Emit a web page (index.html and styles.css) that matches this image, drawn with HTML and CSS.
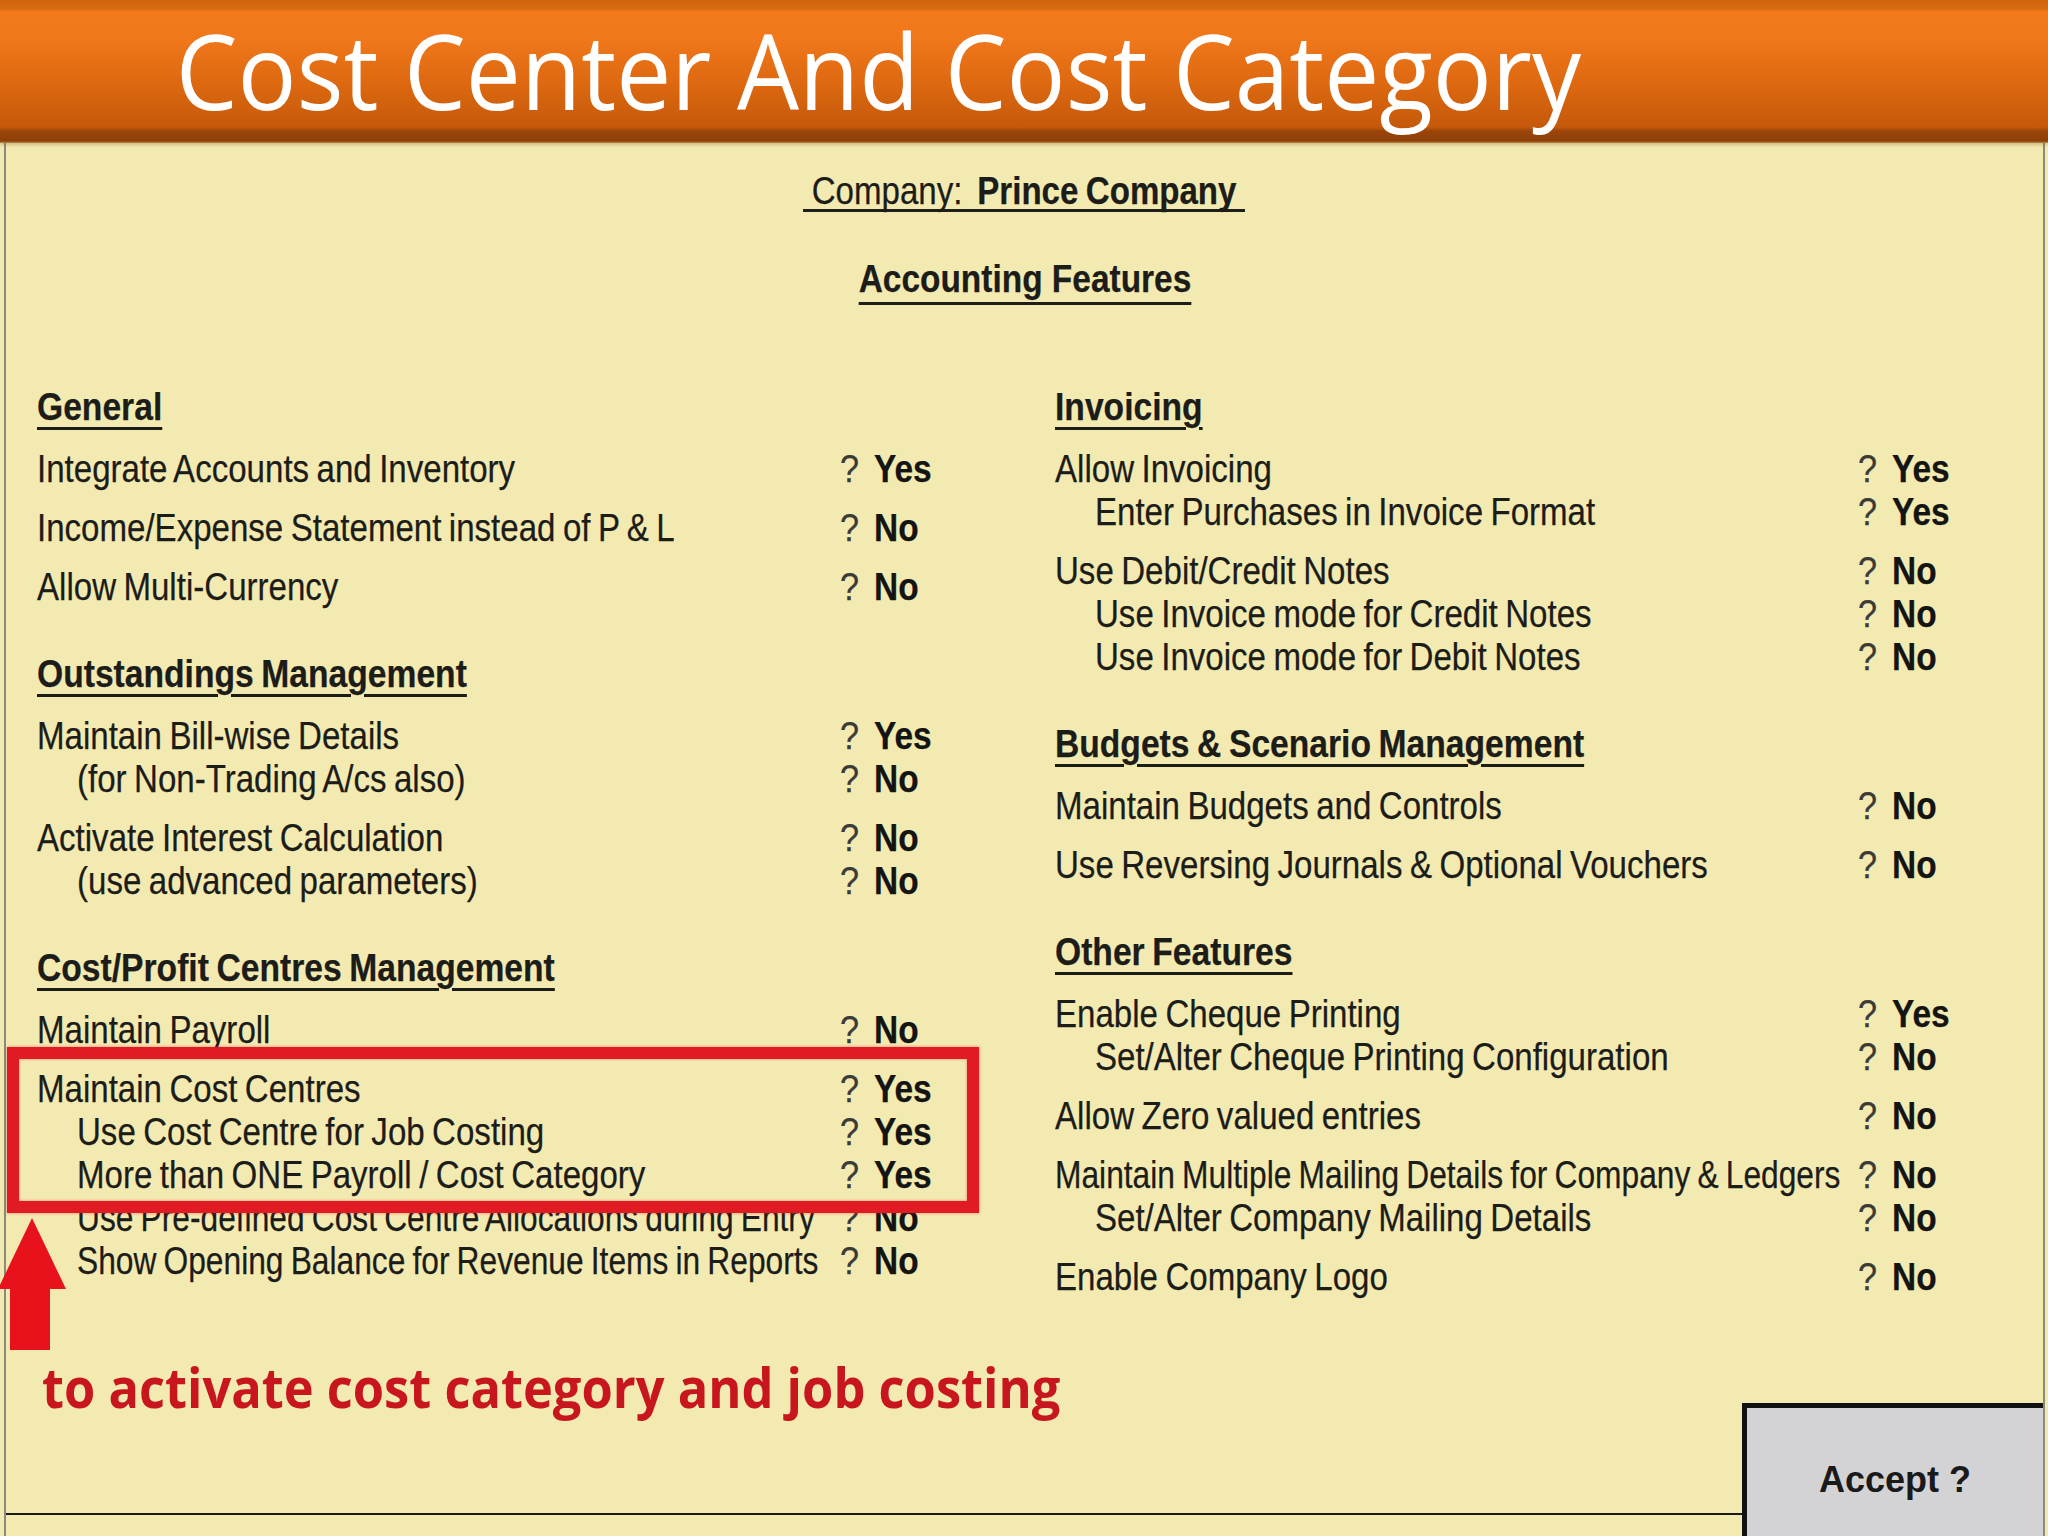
FILE: index.html
```html
<!DOCTYPE html>
<html lang="en">
<head>
<meta charset="utf-8">
<title>Cost Center And Cost Category</title>
<link rel="stylesheet" href="styles.css">
</head>
<body>
<header class="titlebar">
  <h1 class="title">Cost Center And Cost Category</h1>
</header>
<main class="sheet">
  <div class="company"><span class="company-line">Company:&nbsp; <b>Prince Company</b></span></div>
  <div class="features"><span class="features-line">Accounting Features</span></div>

  <div class="columns">
    <div class="col">
      <section class="sec">
        <h2 class="sec-title"><span>General</span></h2>
        <div class="group"><div class="row"><span class="label">Integrate Accounts and Inventory</span><span class="q">?</span><span class="val">Yes</span></div></div>
        <div class="group"><div class="row"><span class="label">Income/Expense Statement instead of P &amp; L</span><span class="q">?</span><span class="val">No</span></div></div>
        <div class="group"><div class="row"><span class="label">Allow Multi-Currency</span><span class="q">?</span><span class="val">No</span></div></div>
      </section>
      <section class="sec">
        <h2 class="sec-title"><span>Outstandings Management</span></h2>
        <div class="group">
          <div class="row"><span class="label">Maintain Bill-wise Details</span><span class="q">?</span><span class="val">Yes</span></div>
          <div class="row sub"><span class="label">(for Non-Trading A/cs also)</span><span class="q">?</span><span class="val">No</span></div>
        </div>
        <div class="group">
          <div class="row"><span class="label">Activate Interest Calculation</span><span class="q">?</span><span class="val">No</span></div>
          <div class="row sub"><span class="label">(use advanced parameters)</span><span class="q">?</span><span class="val">No</span></div>
        </div>
      </section>
      <section class="sec">
        <h2 class="sec-title"><span>Cost/Profit Centres Management</span></h2>
        <div class="group"><div class="row"><span class="label">Maintain Payroll</span><span class="q">?</span><span class="val">No</span></div></div>
        <div class="group">
          <div class="row"><span class="label">Maintain Cost Centres</span><span class="q">?</span><span class="val">Yes</span></div>
          <div class="row sub"><span class="label">Use Cost Centre for Job Costing</span><span class="q">?</span><span class="val">Yes</span></div>
          <div class="row sub"><span class="label">More than ONE Payroll / Cost Category</span><span class="q">?</span><span class="val">Yes</span></div>
          <div class="row sub fit"><span class="label">Use Pre-defined Cost Centre Allocations during Entry</span><span class="q">?</span><span class="val">No</span></div>
          <div class="row sub fit"><span class="label">Show Opening Balance for Revenue Items in Reports</span><span class="q">?</span><span class="val">No</span></div>
        </div>
      </section>
    </div>

    <div class="col">
      <section class="sec">
        <h2 class="sec-title"><span>Invoicing</span></h2>
        <div class="group">
          <div class="row"><span class="label">Allow Invoicing</span><span class="q">?</span><span class="val">Yes</span></div>
          <div class="row sub"><span class="label">Enter Purchases in Invoice Format</span><span class="q">?</span><span class="val">Yes</span></div>
        </div>
        <div class="group">
          <div class="row"><span class="label">Use Debit/Credit Notes</span><span class="q">?</span><span class="val">No</span></div>
          <div class="row sub"><span class="label">Use Invoice mode for Credit Notes</span><span class="q">?</span><span class="val">No</span></div>
          <div class="row sub"><span class="label">Use Invoice mode for Debit Notes</span><span class="q">?</span><span class="val">No</span></div>
        </div>
      </section>
      <section class="sec">
        <h2 class="sec-title"><span>Budgets &amp; Scenario Management</span></h2>
        <div class="group"><div class="row"><span class="label">Maintain Budgets and Controls</span><span class="q">?</span><span class="val">No</span></div></div>
        <div class="group"><div class="row"><span class="label">Use Reversing Journals &amp; Optional Vouchers</span><span class="q">?</span><span class="val">No</span></div></div>
      </section>
      <section class="sec">
        <h2 class="sec-title"><span>Other Features</span></h2>
        <div class="group">
          <div class="row"><span class="label">Enable Cheque Printing</span><span class="q">?</span><span class="val">Yes</span></div>
          <div class="row sub"><span class="label">Set/Alter Cheque Printing Configuration</span><span class="q">?</span><span class="val">No</span></div>
        </div>
        <div class="group"><div class="row"><span class="label">Allow Zero valued entries</span><span class="q">?</span><span class="val">No</span></div></div>
        <div class="group">
          <div class="row fit"><span class="label">Maintain Multiple Mailing Details for Company &amp; Ledgers</span><span class="q">?</span><span class="val">No</span></div>
          <div class="row sub"><span class="label">Set/Alter Company Mailing Details</span><span class="q">?</span><span class="val">No</span></div>
        </div>
        <div class="group"><div class="row"><span class="label">Enable Company Logo</span><span class="q">?</span><span class="val">No</span></div></div>
      </section>
    </div>
  </div>

  <div class="footer">
    <div class="footer-left"><p class="caption"><span>to activate cost category and job costing</span></p></div>
    <div class="accept">Accept ?</div>
  </div>
</main>

<div class="highlight"></div>
<svg class="arrow" viewBox="0 0 66 133" width="66" height="133" aria-hidden="true">
  <polygon points="32,0 66,71 50,71 50,132 10,132 10,71 -2,71" fill="#e8121c"/>
</svg>
</body>
</html>
```
FILE: styles.css
```css
* { box-sizing: border-box; }

html, body {
  margin: 0;
  padding: 0;
}

body {
  width: 2048px;
  height: 1536px;
  overflow: hidden;
  position: relative;
  background: #f3eab2;
  font-family: "Liberation Sans", Arial, sans-serif;
  color: #1c1c18;
}

/* ---------- title bar ---------- */
.titlebar {
  height: 143px;
  background: linear-gradient(to bottom,
    #cf640f 0px, #d86c12 9px, #f37b1a 12px, #f0771a 40px,
    #dc6810 85px, #c5590b 127px, #9a450a 131px, #8e3f08 141px, #b88a4a 143px);
  position: relative;
  z-index: 1;
  box-shadow: 0 2px 3px rgba(140, 100, 30, 0.35);
}

.title {
  margin: 0;
  padding-left: 188px;
  font-family: "Open Sans", "Noto Sans", sans-serif;
  font-weight: 400;
  font-size: 105px;
  line-height: 139px;
  color: #ffffff;
  white-space: nowrap;
  transform: scaleX(0.935);
  transform-origin: left center;
}

/* ---------- sheet ---------- */
.sheet {
  height: 1393px;
  margin: 0 3px 0 4px;
  border-left: 2px solid #8a8a80;
  border-right: 2px solid #8a8a80;
  padding-top: 30px;
  display: flex;
  flex-direction: column;
  font-size: 38px;
  -webkit-text-stroke: 0.25px currentColor;
}

.company, .features {
  display: flex;
  justify-content: center;
}

.company-line {
  display: block;
  line-height: 36px;
  padding: 0 10px;
  border-bottom: 3px solid #1e1e1a;
  white-space: nowrap;
  word-spacing: -2px;
  transform: scaleX(0.87);
  transform-origin: center;
}

.company-line b { font-weight: 700; }

.features { margin-top: 49px; }

.features-line {
  display: block;
  line-height: 36px;
  padding-bottom: 5px;
  border-bottom: 3px solid #1e1e1a;
  font-weight: 700;
  white-space: nowrap;
  transform: scaleX(0.88);
  transform-origin: center;
}

/* ---------- columns ---------- */
.columns {
  margin-top: 81px;
  padding-left: 31px;
  display: grid;
  grid-template-columns: 1018px 1fr;
}

.sec + .sec { margin-top: 44px; }

.sec-title {
  margin: 0 0 19px;
  font-size: 38px;
  font-weight: 700;
  line-height: 43px;
  white-space: nowrap;
}

.sec-title span {
  display: inline-block;
  text-decoration: underline;
  text-decoration-thickness: 3px;
  text-underline-offset: 7px;
  word-spacing: -2px;
  transform: scaleX(0.885);
  transform-origin: left center;
}

.group + .group { margin-top: 16px; }

.row {
  display: grid;
  grid-template-columns: 803px 34px auto;
  line-height: 43px;
  white-space: nowrap;
}

.label,
.q,
.val {
  transform-origin: left center;
}

.label {
  word-spacing: -2px;
  transform: scaleX(0.87);
}

.row.fit .label { transform: scaleX(0.835); }

.row.sub .label { margin-left: 40px; }

.q {
  color: #3a3a36;
  font-weight: 400;
  transform: scaleX(0.9);
}

.val {
  font-weight: 700;
  color: #141412;
  transform: scaleX(0.88);
}

/* ---------- footer ---------- */
.footer {
  margin-top: auto;
  display: flex;
  align-items: flex-end;
  -webkit-text-stroke: 0;
}

.footer-left {
  flex: 1;
  margin-bottom: 21px;
  padding-left: 36px;
  padding-bottom: 96px;
  border-bottom: 2px solid #1a1a18;
}

.caption {
  margin: 0;
  font-family: "Open Sans", "Noto Sans", sans-serif;
  font-weight: 700;
  font-size: 55px;
  line-height: 60px;
  color: #c8161e;
  white-space: nowrap;
}

.caption span {
  display: inline-block;
  transform: scaleX(0.92);
  transform-origin: left center;
}

.accept {
  width: 301px;
  height: 133px;
  border-top: 5px solid #111;
  border-left: 5px solid #111;
  background: #d3d3d5;
  display: flex;
  align-items: center;
  justify-content: center;
  padding-top: 16px;
  font-family: "Liberation Sans", Arial, sans-serif;
  font-weight: 700;
  font-size: 36px;
  color: #1a1a1a;
}

/* ---------- annotations ---------- */
.highlight {
  position: absolute;
  left: 7px;
  top: 1047px;
  width: 972px;
  height: 166px;
  border: 12px solid #e01b24;
  box-shadow: 0 0 3px rgba(224, 27, 36, 0.5), inset 0 0 3px rgba(224, 27, 36, 0.5);
}

.arrow {
  position: absolute;
  left: 0;
  top: 1218px;
  overflow: visible;
}
```
